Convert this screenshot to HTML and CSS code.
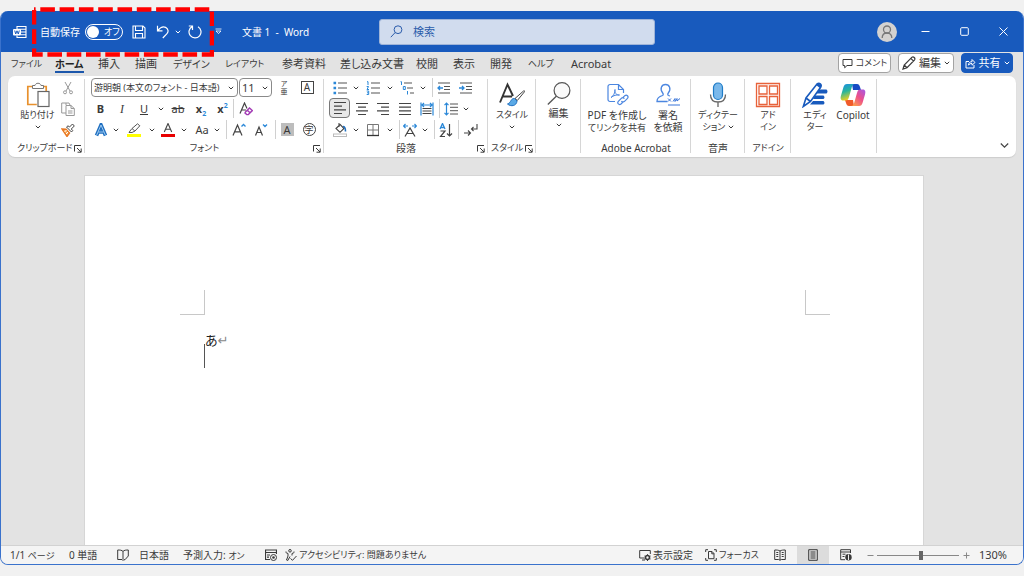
FILE: index.html
```html
<!DOCTYPE html>
<html lang="ja">
<head>
<meta charset="utf-8">
<meta name="viewport" content="width=device-width, initial-scale=1">
<title>文書 1 - Word</title>
<link rel="stylesheet" href="styles.css">
</head>
<body>
<svg class="defs" aria-hidden="true">
  <symbol id="chev" viewBox="0 0 6 6"><path d="M.8 1.800 3 4l2.200-2.200" fill="none" stroke="currentColor"/></symbol>
  <symbol id="launch" viewBox="0 0 8 8"><path d="M.5 6.500V.5H7M3 3l4 4M7.200 3.500v3.700H3.500" fill="none" stroke="currentColor"/></symbol>
</svg>
<div class="window">
  <header class="titlebar">
    <svg class="word-logo" viewBox="0 0 14 14"><path d="M4 4V1.500h9v11H4V10.500M4 4.200h9M8 7h5M8 9.800h5" fill="none" stroke="#fff" stroke-width="1.100"/><rect x="0" y="4" width="8" height="6.500" rx="1" fill="#fff"/><path d="m1.700 5.500 1 3.500L4 5.800 5.300 9l1-3.500" fill="none" stroke="#185abd"/></svg>
    <div class="quick">
      <svg class="highlight" viewBox="0 0 182 50" aria-hidden="true"><rect x="2" y="2.500" width="178" height="45" fill="none" stroke="#f00" stroke-width="4.500" stroke-dasharray="14.600 4.700" stroke-dashoffset="13"/></svg>
      <label class="autosave" for="autosave">自動保存</label>
      <button class="toggle" id="autosave" role="switch" aria-checked="false"><span class="knob"></span><span class="small">オフ</span></button>
      <button class="qbtn" aria-label="上書き保存"><svg class="i14" viewBox="0 0 14 14"><path d="M1 1h10l2 2v10H1ZM3.500 1v4.500h7V1M3.500 13V8.500h7V13" fill="none" stroke="currentColor" stroke-width="1.100"/></svg></button>
      <button class="qbtn" aria-label="元に戻す"><svg class="i14" viewBox="0 0 14 14"><path d="M1.500.8v5h5M1.800 5.500C4 2.800 6.800 1 9.600 2.400c2.700 1.400 3.200 4.300 1.400 6.200L6.800 13" fill="none" stroke="currentColor" stroke-width="1.200"/></svg></button>
      <button class="qchev" aria-label="元に戻す履歴"><svg class="chev"><use href="#chev"/></svg></button>
      <button class="qbtn" aria-label="やり直し"><svg class="i14" viewBox="0 0 14 14"><path d="M4.200 1.600A6 6 0 1 0 10 1.700M4.500 5V1H.8" fill="none" stroke="currentColor" stroke-width="1.200"/></svg></button>
    </div>
    <button class="custom" aria-label="カスタマイズ"><svg class="i7" viewBox="0 0 7 7"><path d="M.5 1h6M1 3h5L3.500 5.600Z" fill="none" stroke="currentColor" stroke-width=".8"/></svg></button>
    <span class="doc-title">文書 1&nbsp; -&nbsp; Word</span>
    <div class="search"><label for="search" aria-label="検索"><svg class="i13" viewBox="0 0 13 13"><circle cx="8" cy="4.700" r="3.900" fill="none" stroke="#2b5cab"/><path d="M5.200 7.500.8 12.200" stroke="#2b5cab"/></svg></label><input id="search" type="text" placeholder="検索"></div>
    <div class="controls">
      <button class="avatar" aria-label="アカウント"><svg viewBox="0 0 20 20"><circle cx="10" cy="7.500" r="3.500"/><path d="M5.200 16c0-3 1.500-5 4.800-5s4.800 2 4.800 5"/></svg></button>
      <button class="win" aria-label="最小化"><svg class="i9" viewBox="0 0 9 9"><path d="M.5 4.500h8"/></svg></button>
      <button class="win" aria-label="最大化"><svg class="i9" viewBox="0 0 9 9"><rect x=".7" y=".7" width="7.600" height="7.600" rx="1"/></svg></button>
      <button class="win" aria-label="閉じる"><svg class="i9" viewBox="0 0 9 9"><path d="m.5.5 8 8m0-8-8 8"/></svg></button>
    </div>
  </header>

  <nav class="tabs">
    <div class="tab-list">
      <a href="#file" class="small">ファイル</a><a href="#home" class="active">ホーム</a><a href="#insert">挿入</a><a href="#draw">描画</a><a href="#design" class="kana">デザイン</a><a href="#layout" class="small">レイアウト</a><a href="#ref">参考資料</a><a href="#mail">差し込み文書</a><a href="#review">校閲</a><a href="#view">表示</a><a href="#dev">開発</a><a href="#help" class="small">ヘルプ</a><a href="#acrobat">Acrobat</a>
    </div>
    <div class="tab-actions">
      <button class="act comment"><svg class="i11" viewBox="0 0 11 11"><path d="M1 1.500h9v6H5L2.700 9.800V7.500H1Z" fill="none" stroke="currentColor"/></svg><span>コメント</span></button>
      <button class="act edit"><svg class="i14" viewBox="0 0 14 14"><path d="m1 13 1.200-4L10 1.200c1.500-1 3.600 1 2.600 2.600L5 11.700ZM8.800 2.400l2.800 2.800M2.200 9 5 11.700" fill="none" stroke="currentColor" stroke-width="1.200"/></svg><span>編集</span><svg class="chev"><use href="#chev"/></svg></button>
      <button class="act share"><svg class="i11" viewBox="0 0 11 11"><path d="M4 3.500H1v6.500h8V7M3.500 7.200c0-2.500 1.500-3.500 3.500-3.500V1.500L10 4.500 7 7.200V5.500c-1.500 0-2.500.3-3.500 1.700Z" fill="none" stroke="currentColor"/></svg><span>共有</span><svg class="chev"><use href="#chev"/></svg></button>
    </div>
  </nav>

  <section class="ribbon">
    <div class="group g-clip">
      <div class="body">
        <button class="big"><svg class="i26" viewBox="0 0 26 26"><path d="M8 4.500H2.800v18h9M18 4.500h3.200V9" fill="none" stroke="#e8912d" stroke-width="1.700"/><path d="M7.500 6.500v-3H10c.5-3 5.500-3 6 0h2.500v3Z" fill="#fff" stroke="#777"/><rect x="13" y="9.500" width="11" height="15" fill="#fff" stroke="#666" stroke-width="1.200"/></svg><span class="small">貼り付け</span><svg class="chev"><use href="#chev"/></svg></button>
        <div class="stack">
          <button aria-label="切り取り"><svg class="i14" viewBox="0 0 14 14"><path d="m4 1 5 9M10 1 5 10" stroke="#999" fill="none"/><circle cx="4" cy="11.300" r="1.500" fill="none" stroke="#999"/><circle cx="10" cy="11.300" r="1.500" fill="none" stroke="#999"/></svg></button>
          <button aria-label="コピー"><svg class="i14" viewBox="0 0 14 14"><path d="M5 3V1H.7v10H5M5 3.500h5l3.300 3v7H5ZM10 3.500v3h3.300M7 9h4.500M7 11h4.500M5 1h3l1 2" fill="none" stroke="#999"/></svg></button>
          <button aria-label="書式のコピー"><svg class="i14" viewBox="0 0 14 14"><path d="m1 6 4 .2L8.500 10 6 13.500Z" fill="#f8b060" stroke="#e87722" stroke-width="1.400"/><path d="m3.500 9 2-2M5 11l2-2" stroke="#fff"/><path d="m5.500 4 5 5 1.200-1.500L10.300 6l3-3L11.500 1l-3 3L7 2.800Z" fill="#fff" stroke="#444"/></svg></button>
        </div>
      </div>
      <div class="caption"><span>クリップボード</span><button aria-label="詳細"><svg class="i8"><use href="#launch"/></svg></button></div>
    </div>

    <div class="group g-font">
      <div class="body rows">
        <div class="row f1">
          <div class="combo"><select class="small" aria-label="フォント"><option>游明朝 (本文のフォント - 日本語)</option></select><svg class="chev"><use href="#chev"/></svg></div>
          <div class="combo"><select aria-label="サイズ"><option>11</option></select><svg class="chev"><use href="#chev"/></svg></div>
          <button class="ruby"><span>ア</span><span>亜</span></button>
          <button><span class="boxed">A</span></button>
        </div>
        <div class="row f2">
          <button><b>B</b></button><button class="ital">I</button><button><u>U</u></button><button aria-label="下線"><svg class="chev"><use href="#chev"/></svg></button><button><s>ab</s></button><button class="scr"><b>x<sub>2</sub></b></button><button class="scr"><b>x<sup>2</sup></b></button><i class="div"></i>
          <button aria-label="書式をクリア"><svg class="i14" viewBox="0 0 14 14"><path d="M1 11.500 5.500 1 8 6.500M2.700 8H7" fill="none" stroke="#444" stroke-width="1.200"/><path d="m6.500 10 4-4 2.800 2.600-4 4H7.800L6 11ZM8.300 8.300l2.700 2.500" fill="#fff" stroke="#a33cb5" stroke-width="1.400"/></svg></button>
        </div>
        <div class="row f3">
          <button aria-label="文字の効果"><svg class="i14" viewBox="0 0 14 14"><path d="M2.500 12.500 7 2l4.500 10.500M4.300 9h5.400" fill="none" stroke="#1f6fc0" stroke-width="3.600"/><path d="M2.500 12.500 7 2l4.500 10.500M4.300 9h5.400" fill="none" stroke="#9fcaf0" stroke-width="1"/></svg></button><button aria-label="効果"><svg class="chev"><use href="#chev"/></svg></button>
          <button aria-label="蛍光ペン"><svg class="i14" viewBox="0 0 14 14"><path d="m3 8 2-2.500L10.500.8l2.300 2L8 8 5 9.500H2ZM5 5.500 7.800 8" fill="none" stroke="#555"/><rect x="0" y="11" width="14" height="3" fill="#ff0"/></svg></button><button aria-label="色"><svg class="chev"><use href="#chev"/></svg></button>
          <button aria-label="フォントの色"><svg class="i14" viewBox="0 0 14 14"><path d="M3.300 9 7 .5 10.700 9M4.500 6.200h5" fill="none" stroke="#444" stroke-width="1.100"/><rect x="0" y="11" width="14" height="3" fill="#e80000"/></svg></button><button aria-label="色の選択"><svg class="chev"><use href="#chev"/></svg></button>
          <button>Aa</button><button aria-label="文字種"><svg class="chev"><use href="#chev"/></svg></button><i class="div"></i>
          <button aria-label="拡大"><svg class="i14" viewBox="0 0 14 14"><path d="M1 12.500 5.500 2 10 12.500M2.700 8.800h5.600" fill="none" stroke="#444" stroke-width="1.200"/><path d="m9.500 3.500 2-2 2 2" fill="none" stroke="#2b88d8" stroke-width="1.300"/></svg></button>
          <button aria-label="縮小"><svg class="i14" viewBox="0 0 14 14"><path d="M1.500 12.500 5 4l3.500 8.500M2.800 9.500h4.400" fill="none" stroke="#444" stroke-width="1.200"/><path d="m9 1.500 2 2 2-2" fill="none" stroke="#2b88d8" stroke-width="1.300"/></svg></button>
          <i class="div"></i><button><span class="shade">A</span></button><button><span class="circ">字</span></button>
        </div>
      </div>
      <div class="caption"><span>フォント</span><button aria-label="詳細"><svg class="i8"><use href="#launch"/></svg></button></div>
    </div>

    <div class="group g-para">
      <div class="body rows">
        <div class="row p1">
          <button aria-label="箇条書き"><svg class="i14" viewBox="0 0 14 14"><path d="M5 2h9M5 7h9M5 12h9" stroke="#555" stroke-width="1.200"/><path d="M.5 2h2.600M.5 7h2.600M.5 12h2.600" stroke="#2b88d8" stroke-width="2.600"/></svg></button><button aria-label="行頭文字"><svg class="chev"><use href="#chev"/></svg></button>
          <button aria-label="段落番号"><svg class="i14" viewBox="0 0 14 14"><path d="M5 2h9M5 7h9M5 12h9" stroke="#555" stroke-width="1.200"/><path d="M1 .7h1V4M.7 5.500h1.800L1 8.500h2M.7 10h2v3.500h-2M1 11.800h1.500" fill="none" stroke="#2b88d8"/></svg></button><button aria-label="番号書式"><svg class="chev"><use href="#chev"/></svg></button>
          <button aria-label="アウトライン"><svg class="i14" viewBox="0 0 14 14"><path d="M4 2h8M7 7h6M10 12h4" stroke="#555" stroke-width="1.200"/><path d="M.5.7h1V4M3.300 5.500h2v3h-2ZM7.500 10v3.500" fill="none" stroke="#2b88d8"/></svg></button><button aria-label="リスト"><svg class="chev"><use href="#chev"/></svg></button><i class="div"></i>
          <button aria-label="インデントを減らす"><svg class="i14" viewBox="0 0 14 14"><path d="M1 2h12M7 5.500h6M7 8.500h6M1 12h12" stroke="#555" stroke-width="1.200"/><path d="M6 7H1m2-2L1 7l2 2" fill="none" stroke="#2b88d8" stroke-width="1.300"/></svg></button>
          <button aria-label="インデントを増やす"><svg class="i14" viewBox="0 0 14 14"><path d="M1 2h12M7 5.500h6M7 8.500h6M1 12h12" stroke="#555" stroke-width="1.200"/><path d="M0 7h5M3 5l2 2-2 2" fill="none" stroke="#2b88d8" stroke-width="1.300"/></svg></button>
        </div>
        <div class="row p2">
          <button class="on" aria-label="左揃え"><svg class="i14" viewBox="0 0 14 14"><path d="M1 1.500h12M1 5.200h8M1 8.800h12M1 12.500h8" stroke="#444" stroke-width="1.200"/></svg></button>
          <button aria-label="中央揃え"><svg class="i14" viewBox="0 0 14 14"><path d="M1 1.500h12M3 5.200h8M1 8.800h12M3 12.500h8" stroke="#444" stroke-width="1.200"/></svg></button>
          <button aria-label="右揃え"><svg class="i14" viewBox="0 0 14 14"><path d="M1 1.500h12M5 5.200h8M1 8.800h12M5 12.500h8" stroke="#444" stroke-width="1.200"/></svg></button>
          <button aria-label="両端揃え"><svg class="i14" viewBox="0 0 14 14"><path d="M1 1.500h12M1 5.200h12M1 8.800h12M1 12.500h12" stroke="#444" stroke-width="1.200"/></svg></button>
          <button aria-label="均等割り付け"><svg class="i14" viewBox="0 0 14 14"><path d="M2.500 6.500h9M2.500 9h9M2.500 11.500h9" stroke="#444"/><path d="M1 .5v13M13 .5v13M1.500 3h11M4 1 2 3l2 2M10 1l2 2-2 2" fill="none" stroke="#2b88d8" stroke-width="1.200"/></svg></button>
          <i class="div"></i>
          <button aria-label="行間"><svg class="i14" viewBox="0 0 14 14"><path d="M6 2h8M6 5.300h8M6 8.700h8M6 12h8" stroke="#555"/><path d="M2.500 1v12M.5 3.200l2-2 2 2M.5 10.800l2 2 2-2" fill="none" stroke="#2b88d8" stroke-width="1.200"/></svg></button><button aria-label="行間の選択"><svg class="chev"><use href="#chev"/></svg></button>
        </div>
        <div class="row p3">
          <button aria-label="塗りつぶし"><svg class="i14" viewBox="0 0 14 14"><path d="m3 5.500 4.200-4 3.800 4-4 3.800ZM6 0v4" fill="none" stroke="#444" stroke-width="1.100"/><path d="M10 3.500c2 0 2.500 2 2.500 5" fill="none" stroke="#1f6fc0" stroke-width="1.600"/><rect x=".5" y="11" width="13" height="2.500" fill="#fff" stroke="#bbb"/></svg></button><button aria-label="塗りつぶしの色"><svg class="chev"><use href="#chev"/></svg></button>
          <button aria-label="罫線"><svg class="i14" viewBox="0 0 14 14"><path d="M1.500 1.500h11v11h-11ZM7 1.500v11M1.500 7h11" fill="none" stroke="#777"/><path d="M1 12.500h12" stroke="#333" stroke-width="1.300"/></svg></button><button aria-label="罫線の選択"><svg class="chev"><use href="#chev"/></svg></button><i class="div"></i>
          <button aria-label="拡張書式"><svg class="i14" viewBox="0 0 14 14"><path d="M2 13.500 7 5l5 8.500M4 10.500h6" fill="none" stroke="#444" stroke-width="1.200"/><path d="M.5 3H5M2.500 1l-2 2 2 2M13.500 3H9M11.500 1l2 2-2 2" fill="none" stroke="#2b88d8" stroke-width="1.200"/></svg></button><button aria-label="拡張書式の選択"><svg class="chev"><use href="#chev"/></svg></button><i class="div"></i>
          <button aria-label="並べ替え"><svg class="i14" viewBox="0 0 14 14"><path d="M1 6 3.500.5 6 6M2 4.500h3" fill="none" stroke="#2b88d8" stroke-width="1.300"/><path d="M1.500 8H6l-4.500 5.500H6M10.500 1v12M8 10.500l2.500 2.500 2.500-2.500" fill="none" stroke="#444" stroke-width="1.200"/></svg></button><i class="div"></i>
          <button aria-label="編集記号"><svg class="i14" viewBox="0 0 14 14"><path d="M0 10h6M4 7.500 6.500 10 4 12.500M13 1v5H7.500M9.500 4l-2 2 2 2" fill="none" stroke="#444" stroke-width="1.100"/></svg></button>
        </div>
      </div>
      <div class="caption"><span class="kanji">段落</span><button aria-label="詳細"><svg class="i8"><use href="#launch"/></svg></button></div>
    </div>

    <div class="group g-style">
      <div class="body"><button class="big"><svg class="i26" viewBox="0 0 26 26"><path d="M1 20.500 8.500 2.500 14 14M4 14.500h9" fill="none" stroke="#333" stroke-width="1.900"/><path d="M24.500 9c1-.8 1.500.3.800 1l-7 8.500-2.300-2Z" fill="#fff" stroke="#444"/><path d="M15.500 16.500c-4-.3-3 4-7 5.500 3.500 3 9 2 9.500-3Z" fill="#5aa9e6" stroke="#1f6fc0"/></svg><span class="small">スタイル</span><svg class="chev"><use href="#chev"/></svg></button></div>
      <div class="caption"><span>スタイル</span><button aria-label="詳細"><svg class="i8"><use href="#launch"/></svg></button></div>
    </div>

    <div class="group g-edit">
      <div class="body"><button class="big"><svg class="i24" viewBox="0 0 24 24"><circle cx="15" cy="8.500" r="7.900" fill="#fafafa" stroke="#555" stroke-width="1.200"/><path d="M9.300 14.200.8 22.500" stroke="#555" stroke-width="1.300"/></svg><span>編集</span><svg class="chev"><use href="#chev"/></svg></button></div>
    </div>

    <div class="group g-acro">
      <div class="body">
        <button class="big"><svg class="i24" viewBox="0 0 24 24"><path d="M10 19.500H5a2 2 0 0 1-2-2v-13a2 2 0 0 1 2-2h8.500l5 5V11M13.500 2.500v5h5" fill="none" stroke="#4b86e0" stroke-width="1.200"/><path d="M6 15.500c2-1 4.500-5 4-8-.8 3 1.500 6 4.500 5.500-3-.5-6 .5-8.500 2.500" fill="none" stroke="#4b86e0"/><path d="m17.500 16 2.300-2.300c2-1.500 4.200.8 2.700 2.700l-3 3c-1 1-2.500.7-3-.4M18.500 19.500 16 22c-2 1.500-4.200-.8-2.700-2.700l3-3c1-1 2.500-.7 3 .4" fill="none" stroke="#4b86e0" stroke-width="1.200"/></svg><span>PDF を作成し<br><span class="small">てリンクを共有</span></span></button>
        <button class="big"><svg class="i24" viewBox="0 0 24 24"><path d="M11.500 19.500H1c0-3.500 2-5 5.500-6 .8-.3 1-1.500.2-2.500C3.500 7 5.500 2.500 9.500 2.500S15.500 7 12.300 11c-.8 1-.6 2.200.2 2.500l1.500.5" fill="none" stroke="#4b86e0" stroke-width="1.300"/><path d="m12 16.500 3 3m0-3-3 3M17 19.500l2-3v3l2-3v2.500l3-2.500M12 23h12" fill="none" stroke="#3974d9"/></svg><span>署名<br>を依頼</span></button>
      </div>
      <div class="caption"><span class="kanji">Adobe Acrobat</span></div>
    </div>

    <div class="group g-voice">
      <div class="body"><button class="big"><svg class="i26" viewBox="0 0 26 26"><rect x="8.500" y="1" width="9" height="16.500" rx="4.500" fill="#7ab8ea" stroke="#1f7cc7" stroke-width="1.200"/><path d="M5.500 12.500c0 5 3 7.500 7.500 7.500s7.500-2.500 7.500-7.500M13 20v5" fill="none" stroke="#666" stroke-width="1.300"/></svg><span class="small">ディクテー<br>ション <svg class="chev"><use href="#chev"/></svg></span></button></div>
      <div class="caption"><span class="kanji">音声</span></div>
    </div>
    <div class="group g-addin">
      <div class="body"><button class="big"><svg class="i26" viewBox="0 0 26 26"><path d="M1.500 1.500h23v23h-23ZM4 4h8v8H4ZM14.500 4h8v8h-8ZM4 14.500h8v8H4ZM14.500 14.500h8v8h-8Z" fill="none" stroke="#e8623a" stroke-width="1.300"/></svg><span class="small">アド<br>イン</span></button></div>
      <div class="caption"><span>アドイン</span></div>
    </div>
    <div class="group g-editor">
      <div class="body">
        <button class="big"><svg class="i26" viewBox="0 0 26 26"><path d="M15 7.500h9.500q2 2 0 4H14ZM13 13.500h8.500q2 2 0 3.500H11ZM11 19h10.500q2 2 0 3.500H8Z" fill="#185abd"/><path d="M1.300 24.500 4 16 15 2c2.500-1.800 5 .5 3.800 3L8.500 19.500ZM4 16l4.500 3.500" fill="#fff" stroke="#185abd" stroke-width="1.600"/><path d="m14 3 4.500 3.500 1-3L16 1Z" fill="#185abd"/></svg><span class="small">エディ<br>ター</span></button>
        <button class="big"><svg class="i26" viewBox="0 0 26 26"><defs><linearGradient id="ca" x1="0" y1="0" x2=".3" y2="1"><stop offset="0" stop-color="#1a8be8"/><stop offset=".5" stop-color="#29b59b"/><stop offset="1" stop-color="#ebd022"/></linearGradient><linearGradient id="cb" x1="1" y1="0" x2=".2" y2="1"><stop offset="0" stop-color="#a459e8"/><stop offset=".5" stop-color="#ec4f8b"/><stop offset="1" stop-color="#ffa04a"/></linearGradient></defs><path d="M12 2h5c2 0 2.500 1.500 3 3l1 3h-8Z" fill="#174bc4"/><path d="M14 24H9c-2 0-2.500-1.500-3-3l-1-3h8Z" fill="#f05b2b"/><path d="M7 2h8c-2 0-2.700 1.500-3.300 3.500L9 15c-.6 2.500-1.500 3.500-3.500 3.500H3C.5 18.500.3 16 1 13.500L3.500 5C4.200 3 5 2 7 2Z" fill="url(#ca)"/><path d="M19 24h-8c2 0 2.700-1.500 3.300-3.500L17 11c.6-2.500 1.500-3.500 3.500-3.500H23c2.500 0 2.700 2.500 2 5L22.500 21c-.7 2-1.500 3-3.500 3Z" fill="url(#cb)"/></svg><span>Copilot</span></button>
      </div>
    </div>
    <button class="collapse" aria-label="リボンを折りたたむ"><svg class="i9" viewBox="0 0 9 9"><path d="m.8 2.500 3.700 3.700 3.700-3.700" fill="none" stroke="#444" stroke-width="1.200"/></svg></button>
  </section>

  <main class="canvas">
    <article class="page">
      <div class="marks"><i class="mark left"></i><i class="mark right"></i></div>
      <p class="line" contenteditable="true">あ<span class="ret">↵</span></p>
    </article>
  </main>

  <footer class="status">
    <div class="st-left">
      <span>1/1 <span class="small">ページ</span></span><span>0 単語</span>
      <button aria-label="校正"><svg class="i12" viewBox="0 0 12 12"><path d="M6 2.500C5 1 2.500 1 .7 1v9.500H5l1 1 1-1 1 .5M6 2.500C7 1 9.500 1 11.300 1v6L8 10.700M6 2.500v8" fill="none" stroke="currentColor"/></svg></button>
      <span>日本語</span><span>予測入力: <span class="small">オン</span></span>
      <button aria-label="マクロ"><svg class="i12" viewBox="0 0 12 12"><path d="M11.500 5V1H.5v9.500H5M.5 3.500h11M2 6h3M2 8.200h2" fill="none" stroke="currentColor" stroke-width="1.200"/><circle cx="8.500" cy="8.500" r="3" fill="none" stroke="currentColor"/><circle cx="8.500" cy="8.500" r="1.300" fill="currentColor"/></svg></button>
      <button class="acc"><svg class="i12" viewBox="0 0 12 12"><circle cx="5" cy="1.800" r="1.300" fill="none" stroke="currentColor"/><path d="M1 2.500c-.8.800 0 1.300 2 2v2.500l-1.500 4 1.300.5L5 7.500M9 2.500c.8.800 0 1.300-2 2v2M5.500 9.500 7.500 11.300 11.500 7" fill="none" stroke="currentColor"/></svg><span class="small">アクセシビリティ: 問題ありません</span></button>
    </div>
    <div class="st-right">
      <button><svg class="i12" viewBox="0 0 12 12"><path d="M5.500 9H.7V1.500h10.600V5M3 11h3" fill="none" stroke="currentColor"/><circle cx="8.500" cy="8.500" r="2" fill="none" stroke="currentColor" stroke-width="1.600"/><path d="M8.500 5.200v1M8.500 11v1M5.500 7l1 .6M11.500 7l-1 .6M5.500 10l1-.6M11.500 10l-1-.6" stroke="currentColor"/></svg><span>表示設定</span></button>
      <button><svg class="i12" viewBox="0 0 12 12"><path d="M3 .7H.7V3M9 .7h2.300V3M3 11.300H.7V9M9 11.300h2.300V9M3.500 2.500H7l2 2V9.700H3.500ZM6.800 2.500v2.300H9" fill="none" stroke="currentColor"/></svg><span class="small">フォーカス</span></button>
      <button class="view" aria-label="閲覧モード"><svg class="i12" viewBox="0 0 12 12"><path d="M6 2C4.500 1 2.500 1 .7 1v9.500h4l1.300.8 1.300-.8h4V1C9.500 1 7.500 1 6 2Zm0 0v9M2.300 3.500h2M2.300 5.500h2M2.300 7.500h2M7.700 3.500h2M7.700 5.500h2M7.700 7.500h2" fill="none" stroke="currentColor"/></svg></button>
      <button class="view sel" aria-label="印刷レイアウト"><svg class="i12" viewBox="0 0 12 12"><path d="M1.700.7h8.600v10.600H1.700ZM3.500 3h5M3.500 5h5M3.500 7h5M3.500 9h5" fill="none" stroke="currentColor"/></svg></button>
      <button class="view" aria-label="Webレイアウト"><svg class="i12" viewBox="0 0 12 12"><path d="M10.500 4V.7H.7v10H5M.7 3h9.800M2.500 5.200h3M2.500 7.500h2" fill="none" stroke="currentColor"/><circle cx="8.500" cy="8.300" r="3.200" fill="currentColor"/><path d="M8.500 5.500v5.500" stroke="#eee"/></svg></button>
      <button class="zoombtn" aria-label="縮小"><svg class="i7" viewBox="0 0 7 7"><path d="M.5 3.500h6" stroke="#888"/></svg></button>
      <input class="slider" type="range" min="0" max="100" value="54" aria-label="ズーム">
      <button class="zoombtn" aria-label="拡大"><svg class="i7" viewBox="0 0 7 7"><path d="M.5 3.500h6M3.500.5v6" stroke="#888"/></svg></button>
      <span class="pct">130%</span>
    </div>
  </footer>
</div>
</body>
</html>
```
FILE: styles.css
```css
* { box-sizing: border-box; }
body {
  margin: 0;
  padding: 11px 0;
  min-height: 100vh;
  display: flex;
  background: #f1f1f1;
  color: #3a3a3a;
  font: 11px/14px "Noto Sans", "Noto Sans CJK JP", sans-serif;
  font-feature-settings: "palt";
}
button, input, select { font: inherit; font-feature-settings: inherit; color: inherit; }
button { display: flex; align-items: center; justify-content: center; padding: 0; border: 0; background: none; white-space: nowrap; }
svg { flex: none; display: block; }
.defs { position: absolute; width: 0; height: 0; }
.chev { width: 6px; height: 6px; }
.i7 { width: 7px; height: 7px; }
.i8 { width: 8px; height: 8px; }
.i9 { width: 9px; height: 9px; }
.i11 { width: 11px; height: 11px; }
.i12 { width: 12px; height: 12px; }
.i13 { width: 13px; height: 13px; }
.i14 { width: 14px; height: 14px; }
.i24 { width: 24px; height: 24px; }
.i26 { width: 26px; height: 26px; }
.kana { font-size: 10px; }
.small { font-size: 9px; }

.window {
  flex: 1;
  min-width: 0;
  display: flex;
  flex-direction: column;
  border: 1px solid #3a72cc;
  border-top: 0;
  border-radius: 8px;
  background: #e3e3e3;
}

/* title bar */
.titlebar {
  height: 41px;
  display: flex;
  align-items: center;
  padding-left: 12px;
  background: #185abd;
  border-radius: 7px 7px 0 0;
  color: #fff;
}
.word-logo { width: 14px; height: 14px; }
.quick { position: relative; display: flex; align-items: center; margin-left: 13px; }
.highlight { position: absolute; left: -8px; top: -15px; width: 182px; height: 50px; pointer-events: none; }
.autosave { width: 45px; font-size: 10px; white-space: nowrap; }
.toggle { width: 38px; height: 16px; gap: 5px; margin-right: 7px; justify-content: flex-start; padding: 0 1px; border: 1px solid #fff; border-radius: 8px; }
.knob { width: 12px; height: 12px; border-radius: 50%; background: #fff; }
.qbtn { width: 18px; height: 20px; margin-right: 6px; }
.qchev { width: 8px; height: 20px; margin: 0 4px 0 -4px; }
.custom { width: 9px; margin-left: 4px; }
.doc-title { margin-left: 19px; width: 137px; font-size: 10px; white-space: nowrap; }
.search {
  flex: 1;
  max-width: 276px;
  height: 26px;
  display: flex;
  align-items: center;
  gap: 10px;
  padding: 0 10px;
  background: #d1dcee;
  border: 1px solid #9fb4d8;
  border-radius: 3px;
}
.search input { flex: 1; min-width: 0; padding: 0; border: 0; outline: 0; background: none; }
.search input::placeholder { color: #2b5cab; opacity: 1; }
.controls { display: flex; align-items: center; margin-left: auto; }
.avatar { width: 20px; height: 20px; margin-right: 9px; border-radius: 50%; background: #d4d2d0; }
.avatar svg { width: 20px; height: 20px; fill: none; stroke: #777; stroke-width: 1.3; }
.win { width: 39px; height: 30px; }
.win svg { fill: none; stroke: #fff; }

/* tabs */
.tabs { height: 24px; display: flex; justify-content: space-between; padding: 0 10px; }
.tab-list {
  display: grid;
  grid-template-columns: 44px 43px 37px 38px 52px 57px 58px 76px 37px 37px 38px 43px 48px;
}
.tab-list a { justify-self: start; height: 21px; padding-top: 5px; color: inherit; text-decoration: none; white-space: nowrap; }
.tab-list .active { font-weight: 700; font-size: 10px; color: #222; border-bottom: 2px solid #1c57ab; }
.tab-actions { display: flex; gap: 7px; padding: 1px 0 3px; }
.act { gap: 3px; padding: 0 3px; border: 1px solid #a3a3a3; border-radius: 4px; background: #fff; }
.comment { width: 53px; font-size: 9px; }
.edit { width: 56px; }
.share { width: 52px; background: #185abd; border-color: #185abd; color: #fff; }

/* ribbon */
.ribbon { height: 81px; display: flex; margin: 0 7px; padding: 1px 0; background: #fff; border-radius: 7px; box-shadow: 0 1px 1px #ccc; }
.group { display: flex; flex-direction: column; position: relative; }
.group::after { content: ""; position: absolute; right: 0; top: 2px; bottom: 3px; width: 1px; background: #d6d6d6; }
.body { flex: 1; display: flex; justify-content: center; }
.caption { height: 16px; display: flex; align-items: center; justify-content: center; position: relative; font-size: 9px; white-space: nowrap; }
.caption .kanji { font-size: 10px; }
.caption button { position: absolute; right: 3px; top: 5px; }
.g-clip { width: 77px; }
.g-font { width: 239px; }
.g-para { width: 164px; }
.g-style { width: 48px; }
.g-edit { width: 45px; }
.g-acro { width: 110px; }
.g-voice { width: 54px; }
.g-addin { width: 46px; }
.g-editor { width: 86px; }
.g-style .caption { justify-content: flex-start; padding-left: 3px; }
.g-clip .caption { justify-content: flex-start; padding-left: 9px; }
.big { flex-direction: column; justify-content: flex-start; padding-top: 5px; line-height: 12px; }
.big > span { margin-top: 1px; }
.big > span:not(.small) { font-size: 10px; }
.big > .chev { margin-top: 3px; }
.big span .chev { display: inline-block; }
.g-clip .big { width: 40px; margin-left: 2px; }
.g-acro .big { width: 62px; }
.g-acro .big + .big { width: 36px; }
.g-acro .big > span { margin-top: 3px; }
.g-acro .body { gap: 2px; }
.g-editor .big { width: 38px; }
.stack { width: 20px; display: flex; flex-direction: column; }
.stack button { height: 21px; }
.rows { flex-direction: column; justify-content: flex-start; }
.row { display: grid; height: 21px; padding-left: 5px; }
.row button { height: 21px; }
.div { width: 1px; height: 19px; justify-self: end; align-self: center; background: #d0d0d0; }
.f1 { grid-template-columns: 147px 33px 22px 22px; column-gap: 1px; align-items: center; }
.f1 { padding-left: 6px; }
.f2 { grid-template-columns: 21px 22px 22px 11px 24px 22px 21px 1px 23px; }
.f3 { grid-template-columns: 21px 10px 26px 9px 24px 8px 28px 2px 9px 24px 20px 5px 22px 22px; }
.p1 { grid-template-columns: 22px 10px 24px 10px 23px 9px 6px 22px 22px; }
.p2 { grid-template-columns: 22px 21px 22px 22px 22px 2px 21px 9px; }
.p3 { grid-template-columns: 22px 10px 24px 10px 5px 20px 9px 6px 22px 2px 24px; }
.combo { display: grid; grid-template-columns: 1fr 10px; align-items: center; height: 19px; }
.combo select { grid-area: 1 / 1 / 2 / 3; width: 100%; height: 19px; padding: 0 2px; border: 1px solid #8a8a8a; border-radius: 4px; background: #fff; appearance: none; }
.combo .chev { grid-area: 1 / 2; pointer-events: none; }
.ruby { flex-direction: column; font-size: 7px; line-height: 8px; }
.boxed { width: 13px; height: 13px; border: 1px solid #444; line-height: 11px; font-size: 10px; }
.ital { font-family: "Liberation Serif", serif; font-style: italic; font-size: 12px; }
.scr sub, .scr sup { font-size: 7px; line-height: 0; color: #2b88d8; }
.shade { width: 13px; height: 13px; line-height: 13px; background: #bdbdbd; }
.circ { width: 13px; height: 13px; border: 1px solid #444; border-radius: 50%; font-size: 9px; line-height: 11px; }
.row .on { width: 21px; height: 20px; border: 1px solid #777; border-radius: 4px; background: #e8e8e8; }
.collapse { margin: auto 7px 6px auto; }

/* document */
.canvas { flex: 1; display: flex; justify-content: center; padding: 18px 16px 0 0; }
.page { width: 100%; max-width: 840px; padding: 114px 93px 0 95px; background: #fff; border: 1px solid #d6d6d6; border-bottom: 0; }
.marks { display: flex; justify-content: space-between; }
.mark { width: 25px; height: 25px; border-bottom: 1px solid #c8c8c8; }
.mark.left { border-right: 1px solid #c8c8c8; }
.mark.right { border-left: 1px solid #c8c8c8; }
.line { position: relative; margin: 15px 0 0 24px; padding-left: 1px; font-size: 13px; line-height: 20px; color: #222; outline: 0; }
.line::before { content: ""; position: absolute; left: 0; top: 14px; width: 1px; height: 24px; background: #555; }
.ret { font: 13px/20px "DejaVu Sans", sans-serif; color: #888; }

/* status bar */
.status { height: 19px; display: flex; justify-content: space-between; align-items: stretch; background: #f4f4f4; border-top: 1px solid #d2d2d2; border-radius: 0 0 7px 7px; font-size: 10px; }
.st-left, .st-right { display: grid; align-items: center; white-space: nowrap; }
.st-left { padding-left: 9px; grid-template-columns: 59px 38px 32px 44px 74px 28px auto; }
.st-right { padding-right: 16px; grid-template-columns: 66px 58px 34px 32px 34px 14px 82px 14px 34px; }
.st-left button, .st-right button { gap: 2px; }
.st-right button { justify-content: flex-start; }
.st-right .view, .st-right .zoombtn { justify-content: center; height: 100%; }
.view.sel { background: #dcdcdc; }
.slider { width: 100%; height: 12px; margin: 0; appearance: none; background: linear-gradient(#888, #888) center / 100% 1px no-repeat; }
.slider::-webkit-slider-thumb { appearance: none; width: 4px; height: 9px; background: #666; }
.pct { text-align: right; font-size: 11px; }
```
